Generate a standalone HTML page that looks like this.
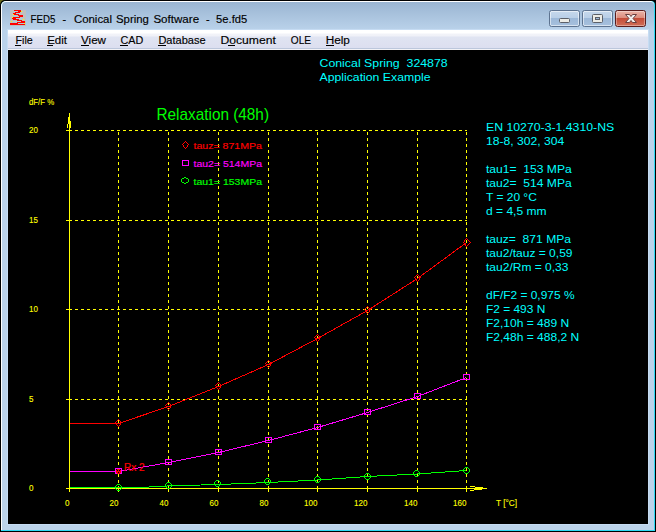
<!DOCTYPE html>
<html><head><meta charset="utf-8"><title>FED5</title>
<style>
html,body{margin:0;padding:0;background:#000;}
body{width:656px;height:532px;position:relative;overflow:hidden;font-family:"Liberation Sans",sans-serif;}
#olive{position:absolute;left:0;top:0;width:5px;height:5px;background:#6a6a1c;}
#frame{position:absolute;left:0;top:0;width:656px;height:532px;background:#000;border-top-left-radius:5px;}
#fr2{position:absolute;left:1px;top:1px;width:654px;height:530px;background:#2fd9f3;border-top-left-radius:5px;border-top-right-radius:4px;}
#fr3{position:absolute;left:1px;top:1px;width:653px;height:529px;background:#fff;border-top-left-radius:5px;border-top-right-radius:4px;}
#fr4{position:absolute;left:2px;top:2px;width:652px;height:528px;background:linear-gradient(to bottom,#9ab5d2 0px,#bad2ea 28px,#bcd3ea 528px);border-top-left-radius:4px;border-top-right-radius:3px;}
#inner{position:absolute;left:7px;top:29px;width:642px;height:496px;background:#c6dcf3;}
#client{position:absolute;left:8px;top:50px;width:640px;height:474px;background:#000;}
#menu{position:absolute;left:8px;top:30px;width:640px;height:20px;background:linear-gradient(to bottom,#fff 0px,#fff 3px,#f2f3f9 4px,#f0f1f8 6px,#e0e4f2 7px,#dcdff0 18px,#bcc7dc 18px,#bcc7dc 19px,#f2f2f6 19px);}
.btn{position:absolute;top:10px;width:29px;height:15px;border:1px solid #5d7390;border-radius:2.5px;background:linear-gradient(to bottom,#c6d8ec 0,#b9cfe7 7px,#9cb8d8 7px,#a6c0dd 15px);box-shadow:inset 0 0 0 1px rgba(255,255,255,.55);}
#bclose{border-color:#5a1c1c;background:linear-gradient(to bottom,#eab4a8 0,#dc8c7c 7px,#c44a36 7px,#d06e58 15px);box-shadow:inset 0 0 0 1px rgba(255,255,255,.35);}
</style></head><body>
<div id="olive"></div><div id="frame"></div><div id="fr2"></div><div id="fr3"></div><div id="fr4"></div><div id="inner"></div>
<div id="menu"></div>
<div id="client"></div>
<div class="btn" style="left:549px"></div>
<div class="btn" style="left:582px"></div>
<div class="btn" id="bclose" style="left:615px"></div>
<svg width="656" height="532" viewBox="0 0 656 532" style="position:absolute;left:0;top:0">
<rect x="559.5" y="18.5" width="10" height="4" rx="1" fill="#ecece6" stroke="#5c6068" stroke-width="1"/>
<rect x="592.5" y="14.5" width="10" height="8" rx="1" fill="#ecece6" stroke="#5c6068" stroke-width="1"/>
<rect x="595.5" y="17.5" width="4" height="2" fill="#9db8d8" stroke="#5c6068" stroke-width="1"/>
<path d="M625.5 14.5 L629.5 14.5 L631 16.5 L632.5 14.5 L636.5 14.5 L633 18.5 L636.5 22.5 L632.5 22.5 L631 20.5 L629.5 22.5 L625.5 22.5 L629 18.5 Z" fill="#f2f0ee" stroke="#6a4040" stroke-width="1"/>
</svg>
<svg width="16" height="16" viewBox="0 0 16 16" style="position:absolute;left:10px;top:10px" shape-rendering="crispEdges"><rect width="16" height="16" fill="#c0c0c0"/><rect x="4" y="1" width="4" height="1" fill="#b2ccd4"/><rect x="6" y="3" width="4" height="1" fill="#b2ccd4"/><rect x="4" y="5" width="4" height="1" fill="#b2ccd4"/><rect x="4" y="6" width="5" height="1" fill="#b2ccd4"/><rect x="6" y="8" width="6" height="1" fill="#b2ccd4"/><rect x="9" y="9" width="3" height="1" fill="#b2ccd4"/><rect x="3" y="11" width="8" height="1" fill="#b2ccd4"/><rect x="5" y="12" width="2" height="1" fill="#b2ccd4"/><rect x="8" y="13" width="6" height="1" fill="#b2ccd4"/><rect x="4" y="0" width="7" height="1" fill="#ff0000"/><rect x="8" y="1" width="3" height="1" fill="#ff0000"/><rect x="5" y="2" width="5" height="1" fill="#ff0000"/><rect x="3" y="3" width="3" height="1" fill="#ff0000"/><rect x="4" y="4" width="5" height="1" fill="#ff0000"/><rect x="8" y="5" width="5" height="1" fill="#ff0000"/><rect x="9" y="6" width="4" height="1" fill="#ff0000"/><rect x="3" y="7" width="7" height="1" fill="#ff0000"/><rect x="2" y="8" width="4" height="1" fill="#ff0000"/><rect x="3" y="9" width="6" height="1" fill="#ff0000"/><rect x="7" y="10" width="5" height="1" fill="#ff0000"/><rect x="11" y="11" width="4" height="1" fill="#ff0000"/><rect x="7" y="12" width="8" height="1" fill="#ff0000"/><rect x="0" y="13" width="8" height="1" fill="#ff0000"/><rect x="0" y="14" width="15" height="1" fill="#ff0000"/><rect x="11" y="1" width="1" height="1" fill="#ffff00"/><rect x="3" y="4" width="1" height="1" fill="#ffff00"/><rect x="2" y="7" width="1" height="1" fill="#ffff00"/><rect x="13" y="9" width="1" height="1" fill="#ffff00"/><rect x="1" y="11" width="1" height="1" fill="#ffff00"/><rect x="14" y="13" width="1" height="1" fill="#ffff00"/></svg>
<svg width="656" height="532" viewBox="0 0 656 532" style="position:absolute;left:0;top:0" font-family="Liberation Sans, sans-serif"><text x="30.6" y="23" font-size="11.6" fill="#000" text-anchor="start" xml:space="preserve" textLength="24.7" lengthAdjust="spacingAndGlyphs" stroke="#000" stroke-width="0.15">FED5</text><text x="62.6" y="23" font-size="11.6" fill="#000" text-anchor="start" xml:space="preserve" textLength="3.6" lengthAdjust="spacingAndGlyphs" stroke="#000" stroke-width="0.15">-</text><text x="73.9" y="23" font-size="11.6" fill="#000" text-anchor="start" xml:space="preserve" textLength="38.1" lengthAdjust="spacingAndGlyphs" stroke="#000" stroke-width="0.15">Conical</text><text x="116" y="23" font-size="11.6" fill="#000" text-anchor="start" xml:space="preserve" textLength="32.8" lengthAdjust="spacingAndGlyphs" stroke="#000" stroke-width="0.15">Spring</text><text x="153.4" y="23" font-size="11.6" fill="#000" text-anchor="start" xml:space="preserve" textLength="45.7" lengthAdjust="spacingAndGlyphs" stroke="#000" stroke-width="0.15">Software</text><text x="205.9" y="23" font-size="11.6" fill="#000" text-anchor="start" xml:space="preserve" textLength="3.6" lengthAdjust="spacingAndGlyphs" stroke="#000" stroke-width="0.15">-</text><text x="216.1" y="23" font-size="11.6" fill="#000" text-anchor="start" xml:space="preserve" textLength="31.1" lengthAdjust="spacingAndGlyphs" stroke="#000" stroke-width="0.15">5e.fd5</text><rect x="15" y="45" width="6" height="1" fill="#000" shape-rendering="crispEdges"/><rect x="47" y="45" width="6" height="1" fill="#000" shape-rendering="crispEdges"/><rect x="81" y="45" width="8" height="1" fill="#000" shape-rendering="crispEdges"/><rect x="120" y="45" width="8" height="1" fill="#000" shape-rendering="crispEdges"/><rect x="158" y="45" width="8" height="1" fill="#000" shape-rendering="crispEdges"/><rect x="228" y="45" width="7" height="1" fill="#000" shape-rendering="crispEdges"/><rect x="326" y="45" width="8" height="1" fill="#000" shape-rendering="crispEdges"/><text x="15.5" y="44" font-size="11.7" fill="#000" text-anchor="start" xml:space="preserve" textLength="17.2" lengthAdjust="spacingAndGlyphs" stroke="#000" stroke-width="0.15">File</text><text x="47.2" y="44" font-size="11.7" fill="#000" text-anchor="start" xml:space="preserve" textLength="19.8" lengthAdjust="spacingAndGlyphs" stroke="#000" stroke-width="0.15">Edit</text><text x="81" y="44" font-size="11.7" fill="#000" text-anchor="start" xml:space="preserve" textLength="25" lengthAdjust="spacingAndGlyphs" stroke="#000" stroke-width="0.15">View</text><text x="120.5" y="44" font-size="11.7" fill="#000" text-anchor="start" xml:space="preserve" textLength="22.8" lengthAdjust="spacingAndGlyphs" stroke="#000" stroke-width="0.15">CAD</text><text x="158.4" y="44" font-size="11.7" fill="#000" text-anchor="start" xml:space="preserve" textLength="47.3" lengthAdjust="spacingAndGlyphs" stroke="#000" stroke-width="0.15">Database</text><text x="220.4" y="44" font-size="11.7" fill="#000" text-anchor="start" xml:space="preserve" textLength="55.4" lengthAdjust="spacingAndGlyphs" stroke="#000" stroke-width="0.15">Document</text><text x="290.8" y="44" font-size="11.7" fill="#000" text-anchor="start" xml:space="preserve" textLength="20.2" lengthAdjust="spacingAndGlyphs" stroke="#000" stroke-width="0.15">OLE</text><text x="325.7" y="44" font-size="11.7" fill="#000" text-anchor="start" xml:space="preserve" textLength="24.2" lengthAdjust="spacingAndGlyphs" stroke="#000" stroke-width="0.15">Help</text></svg>
<svg width="656" height="532" viewBox="0 0 656 532" style="position:absolute;left:0;top:0" shape-rendering="crispEdges"><line x1="118.5" y1="489" x2="118.5" y2="130" stroke="#ffff00" stroke-width="1" stroke-dasharray="3 3"/><rect x="118" y="488" width="1" height="4" fill="#ffff00"/><line x1="168.5" y1="489" x2="168.5" y2="130" stroke="#ffff00" stroke-width="1" stroke-dasharray="3 3"/><rect x="168" y="488" width="1" height="4" fill="#ffff00"/><line x1="218.5" y1="489" x2="218.5" y2="130" stroke="#ffff00" stroke-width="1" stroke-dasharray="3 3"/><rect x="218" y="488" width="1" height="4" fill="#ffff00"/><line x1="268.5" y1="489" x2="268.5" y2="130" stroke="#ffff00" stroke-width="1" stroke-dasharray="3 3"/><rect x="268" y="488" width="1" height="4" fill="#ffff00"/><line x1="317.5" y1="489" x2="317.5" y2="130" stroke="#ffff00" stroke-width="1" stroke-dasharray="3 3"/><rect x="317" y="488" width="1" height="4" fill="#ffff00"/><line x1="367.5" y1="489" x2="367.5" y2="130" stroke="#ffff00" stroke-width="1" stroke-dasharray="3 3"/><rect x="367" y="488" width="1" height="4" fill="#ffff00"/><line x1="417.5" y1="489" x2="417.5" y2="130" stroke="#ffff00" stroke-width="1" stroke-dasharray="3 3"/><rect x="417" y="488" width="1" height="4" fill="#ffff00"/><line x1="466.5" y1="489" x2="466.5" y2="130" stroke="#ffff00" stroke-width="1" stroke-dasharray="3 3"/><rect x="466" y="488" width="1" height="4" fill="#ffff00"/><line x1="69" y1="130.5" x2="467" y2="130.5" stroke="#ffff00" stroke-width="1" stroke-dasharray="3 3"/><rect x="66" y="130" width="4" height="1" fill="#ffff00"/><line x1="69" y1="220.5" x2="467" y2="220.5" stroke="#ffff00" stroke-width="1" stroke-dasharray="3 3"/><rect x="66" y="220" width="4" height="1" fill="#ffff00"/><line x1="69" y1="309.5" x2="467" y2="309.5" stroke="#ffff00" stroke-width="1" stroke-dasharray="3 3"/><rect x="66" y="309" width="4" height="1" fill="#ffff00"/><line x1="69" y1="399.5" x2="467" y2="399.5" stroke="#ffff00" stroke-width="1" stroke-dasharray="3 3"/><rect x="66" y="399" width="4" height="1" fill="#ffff00"/><rect x="69" y="113" width="1" height="379" fill="#ffff00"/><rect x="66" y="488" width="421" height="1" fill="#ffff00"/><rect x="68" y="117" width="1" height="7" fill="#ffff00"/><rect x="70" y="121" width="1" height="7" fill="#ffff00"/><rect x="67" y="124" width="1" height="4" fill="#ffff00"/><rect x="470" y="486" width="5" height="1" fill="#ffff00"/><rect x="475" y="487" width="8" height="1" fill="#ffff00"/><rect x="474" y="489" width="8" height="1" fill="#ffff00"/><rect x="470" y="490" width="4" height="1" fill="#ffff00"/><polyline points="69.5,487.5 118.5,487.5 140.5,487.5 168.5,485.9 218.5,484.5 268.5,482.5 317.5,480.0 367.5,476.5 417.5,474.0 466.5,470.5" fill="none" stroke="#00ff00" stroke-width="1"/><polyline points="69.5,471.5 118.5,471.5 168.5,462.5 218.5,452.5 268.5,440.5 317.5,427.5 367.5,412.5 417.5,396.5 466.5,377.5" fill="none" stroke="#ff00ff" stroke-width="1"/><polyline points="69.5,423.5 118.5,423.5 168.5,406.5 218.5,386.5 268.5,364.5 317.5,338.5 367.5,310.5 417.5,278.5 466.5,242.5" fill="none" stroke="#ff0000" stroke-width="1"/><rect x="118" y="419" width="1" height="1" fill="#ff0000"/><rect x="117" y="420" width="1" height="1" fill="#ff0000"/><rect x="119" y="420" width="1" height="1" fill="#ff0000"/><rect x="116" y="421" width="1" height="1" fill="#ff0000"/><rect x="120" y="421" width="1" height="1" fill="#ff0000"/><rect x="115" y="422" width="1" height="1" fill="#ff0000"/><rect x="121" y="422" width="1" height="1" fill="#ff0000"/><rect x="116" y="423" width="1" height="1" fill="#ff0000"/><rect x="120" y="423" width="1" height="1" fill="#ff0000"/><rect x="116" y="424" width="1" height="1" fill="#ff0000"/><rect x="120" y="424" width="1" height="1" fill="#ff0000"/><rect x="117" y="425" width="1" height="1" fill="#ff0000"/><rect x="119" y="425" width="1" height="1" fill="#ff0000"/><rect x="118" y="426" width="1" height="1" fill="#ff0000"/><rect x="168" y="402" width="1" height="1" fill="#ff0000"/><rect x="167" y="403" width="1" height="1" fill="#ff0000"/><rect x="169" y="403" width="1" height="1" fill="#ff0000"/><rect x="166" y="404" width="1" height="1" fill="#ff0000"/><rect x="170" y="404" width="1" height="1" fill="#ff0000"/><rect x="165" y="405" width="1" height="1" fill="#ff0000"/><rect x="171" y="405" width="1" height="1" fill="#ff0000"/><rect x="166" y="406" width="1" height="1" fill="#ff0000"/><rect x="170" y="406" width="1" height="1" fill="#ff0000"/><rect x="166" y="407" width="1" height="1" fill="#ff0000"/><rect x="170" y="407" width="1" height="1" fill="#ff0000"/><rect x="167" y="408" width="1" height="1" fill="#ff0000"/><rect x="169" y="408" width="1" height="1" fill="#ff0000"/><rect x="168" y="409" width="1" height="1" fill="#ff0000"/><rect x="218" y="382" width="1" height="1" fill="#ff0000"/><rect x="217" y="383" width="1" height="1" fill="#ff0000"/><rect x="219" y="383" width="1" height="1" fill="#ff0000"/><rect x="216" y="384" width="1" height="1" fill="#ff0000"/><rect x="220" y="384" width="1" height="1" fill="#ff0000"/><rect x="215" y="385" width="1" height="1" fill="#ff0000"/><rect x="221" y="385" width="1" height="1" fill="#ff0000"/><rect x="216" y="386" width="1" height="1" fill="#ff0000"/><rect x="220" y="386" width="1" height="1" fill="#ff0000"/><rect x="216" y="387" width="1" height="1" fill="#ff0000"/><rect x="220" y="387" width="1" height="1" fill="#ff0000"/><rect x="217" y="388" width="1" height="1" fill="#ff0000"/><rect x="219" y="388" width="1" height="1" fill="#ff0000"/><rect x="218" y="389" width="1" height="1" fill="#ff0000"/><rect x="268" y="360" width="1" height="1" fill="#ff0000"/><rect x="267" y="361" width="1" height="1" fill="#ff0000"/><rect x="269" y="361" width="1" height="1" fill="#ff0000"/><rect x="266" y="362" width="1" height="1" fill="#ff0000"/><rect x="270" y="362" width="1" height="1" fill="#ff0000"/><rect x="265" y="363" width="1" height="1" fill="#ff0000"/><rect x="271" y="363" width="1" height="1" fill="#ff0000"/><rect x="266" y="364" width="1" height="1" fill="#ff0000"/><rect x="270" y="364" width="1" height="1" fill="#ff0000"/><rect x="266" y="365" width="1" height="1" fill="#ff0000"/><rect x="270" y="365" width="1" height="1" fill="#ff0000"/><rect x="267" y="366" width="1" height="1" fill="#ff0000"/><rect x="269" y="366" width="1" height="1" fill="#ff0000"/><rect x="268" y="367" width="1" height="1" fill="#ff0000"/><rect x="317" y="334" width="1" height="1" fill="#ff0000"/><rect x="316" y="335" width="1" height="1" fill="#ff0000"/><rect x="318" y="335" width="1" height="1" fill="#ff0000"/><rect x="315" y="336" width="1" height="1" fill="#ff0000"/><rect x="319" y="336" width="1" height="1" fill="#ff0000"/><rect x="314" y="337" width="1" height="1" fill="#ff0000"/><rect x="320" y="337" width="1" height="1" fill="#ff0000"/><rect x="315" y="338" width="1" height="1" fill="#ff0000"/><rect x="319" y="338" width="1" height="1" fill="#ff0000"/><rect x="315" y="339" width="1" height="1" fill="#ff0000"/><rect x="319" y="339" width="1" height="1" fill="#ff0000"/><rect x="316" y="340" width="1" height="1" fill="#ff0000"/><rect x="318" y="340" width="1" height="1" fill="#ff0000"/><rect x="317" y="341" width="1" height="1" fill="#ff0000"/><rect x="367" y="306" width="1" height="1" fill="#ff0000"/><rect x="366" y="307" width="1" height="1" fill="#ff0000"/><rect x="368" y="307" width="1" height="1" fill="#ff0000"/><rect x="365" y="308" width="1" height="1" fill="#ff0000"/><rect x="369" y="308" width="1" height="1" fill="#ff0000"/><rect x="364" y="309" width="1" height="1" fill="#ff0000"/><rect x="370" y="309" width="1" height="1" fill="#ff0000"/><rect x="365" y="310" width="1" height="1" fill="#ff0000"/><rect x="369" y="310" width="1" height="1" fill="#ff0000"/><rect x="365" y="311" width="1" height="1" fill="#ff0000"/><rect x="369" y="311" width="1" height="1" fill="#ff0000"/><rect x="366" y="312" width="1" height="1" fill="#ff0000"/><rect x="368" y="312" width="1" height="1" fill="#ff0000"/><rect x="367" y="313" width="1" height="1" fill="#ff0000"/><rect x="417" y="274" width="1" height="1" fill="#ff0000"/><rect x="416" y="275" width="1" height="1" fill="#ff0000"/><rect x="418" y="275" width="1" height="1" fill="#ff0000"/><rect x="415" y="276" width="1" height="1" fill="#ff0000"/><rect x="419" y="276" width="1" height="1" fill="#ff0000"/><rect x="414" y="277" width="1" height="1" fill="#ff0000"/><rect x="420" y="277" width="1" height="1" fill="#ff0000"/><rect x="415" y="278" width="1" height="1" fill="#ff0000"/><rect x="419" y="278" width="1" height="1" fill="#ff0000"/><rect x="415" y="279" width="1" height="1" fill="#ff0000"/><rect x="419" y="279" width="1" height="1" fill="#ff0000"/><rect x="416" y="280" width="1" height="1" fill="#ff0000"/><rect x="418" y="280" width="1" height="1" fill="#ff0000"/><rect x="417" y="281" width="1" height="1" fill="#ff0000"/><rect x="466" y="238" width="1" height="1" fill="#ff0000"/><rect x="465" y="239" width="1" height="1" fill="#ff0000"/><rect x="467" y="239" width="1" height="1" fill="#ff0000"/><rect x="464" y="240" width="1" height="2" fill="#ff0000"/><rect x="468" y="240" width="1" height="1" fill="#ff0000"/><rect x="469" y="241" width="1" height="1" fill="#ff0000"/><rect x="463" y="242" width="1" height="1" fill="#ff0000"/><rect x="470" y="242" width="1" height="1" fill="#ff0000"/><rect x="464" y="243" width="1" height="1" fill="#ff0000"/><rect x="469" y="243" width="1" height="1" fill="#ff0000"/><rect x="465" y="244" width="1" height="2" fill="#ff0000"/><rect x="468" y="244" width="1" height="1" fill="#ff0000"/><rect x="467" y="245" width="1" height="1" fill="#ff0000"/><rect x="466" y="246" width="1" height="1" fill="#ff0000"/><rect x="115.5" y="468.5" width="6" height="5" fill="none" stroke="#ff00ff" stroke-width="1"/><rect x="165.5" y="459.5" width="6" height="5" fill="none" stroke="#ff00ff" stroke-width="1"/><rect x="215.5" y="449.5" width="6" height="5" fill="none" stroke="#ff00ff" stroke-width="1"/><rect x="265.5" y="437.5" width="6" height="5" fill="none" stroke="#ff00ff" stroke-width="1"/><rect x="314.5" y="424.5" width="6" height="5" fill="none" stroke="#ff00ff" stroke-width="1"/><rect x="364.5" y="409.5" width="6" height="5" fill="none" stroke="#ff00ff" stroke-width="1"/><rect x="414.5" y="393.5" width="6" height="5" fill="none" stroke="#ff00ff" stroke-width="1"/><rect x="463.5" y="374.5" width="6" height="5" fill="none" stroke="#ff00ff" stroke-width="1"/><rect x="117" y="484" width="3" height="1" fill="#00ff00"/><rect x="116" y="485" width="1" height="1" fill="#00ff00"/><rect x="120" y="485" width="1" height="1" fill="#00ff00"/><rect x="115" y="486" width="1" height="3" fill="#00ff00"/><rect x="121" y="486" width="1" height="3" fill="#00ff00"/><rect x="116" y="489" width="1" height="1" fill="#00ff00"/><rect x="120" y="489" width="1" height="1" fill="#00ff00"/><rect x="117" y="490" width="3" height="1" fill="#00ff00"/><rect x="167" y="482" width="3" height="1" fill="#00ff00"/><rect x="166" y="483" width="1" height="1" fill="#00ff00"/><rect x="170" y="483" width="1" height="1" fill="#00ff00"/><rect x="165" y="484" width="1" height="3" fill="#00ff00"/><rect x="171" y="484" width="1" height="3" fill="#00ff00"/><rect x="166" y="487" width="1" height="1" fill="#00ff00"/><rect x="170" y="487" width="1" height="1" fill="#00ff00"/><rect x="167" y="488" width="3" height="1" fill="#00ff00"/><rect x="216" y="480" width="3" height="1" fill="#00ff00"/><rect x="215" y="481" width="1" height="1" fill="#00ff00"/><rect x="219" y="481" width="1" height="1" fill="#00ff00"/><rect x="214" y="482" width="1" height="3" fill="#00ff00"/><rect x="220" y="482" width="1" height="3" fill="#00ff00"/><rect x="215" y="485" width="1" height="1" fill="#00ff00"/><rect x="219" y="485" width="1" height="1" fill="#00ff00"/><rect x="216" y="486" width="3" height="1" fill="#00ff00"/><rect x="266" y="478" width="3" height="1" fill="#00ff00"/><rect x="265" y="479" width="1" height="1" fill="#00ff00"/><rect x="269" y="479" width="1" height="1" fill="#00ff00"/><rect x="264" y="480" width="1" height="3" fill="#00ff00"/><rect x="270" y="480" width="1" height="3" fill="#00ff00"/><rect x="265" y="483" width="1" height="1" fill="#00ff00"/><rect x="269" y="483" width="1" height="1" fill="#00ff00"/><rect x="266" y="484" width="3" height="1" fill="#00ff00"/><rect x="316" y="476" width="3" height="1" fill="#00ff00"/><rect x="315" y="477" width="1" height="1" fill="#00ff00"/><rect x="319" y="477" width="1" height="1" fill="#00ff00"/><rect x="314" y="478" width="1" height="3" fill="#00ff00"/><rect x="320" y="478" width="1" height="3" fill="#00ff00"/><rect x="315" y="481" width="1" height="1" fill="#00ff00"/><rect x="319" y="481" width="1" height="1" fill="#00ff00"/><rect x="316" y="482" width="3" height="1" fill="#00ff00"/><rect x="366" y="473" width="3" height="1" fill="#00ff00"/><rect x="365" y="474" width="1" height="1" fill="#00ff00"/><rect x="369" y="474" width="1" height="1" fill="#00ff00"/><rect x="364" y="475" width="1" height="3" fill="#00ff00"/><rect x="370" y="475" width="1" height="3" fill="#00ff00"/><rect x="365" y="478" width="1" height="1" fill="#00ff00"/><rect x="369" y="478" width="1" height="1" fill="#00ff00"/><rect x="366" y="479" width="3" height="1" fill="#00ff00"/><rect x="415" y="470" width="3" height="1" fill="#00ff00"/><rect x="414" y="471" width="1" height="1" fill="#00ff00"/><rect x="418" y="471" width="1" height="1" fill="#00ff00"/><rect x="413" y="472" width="1" height="3" fill="#00ff00"/><rect x="419" y="472" width="1" height="3" fill="#00ff00"/><rect x="414" y="475" width="1" height="1" fill="#00ff00"/><rect x="418" y="475" width="1" height="1" fill="#00ff00"/><rect x="415" y="476" width="3" height="1" fill="#00ff00"/><rect x="465" y="467" width="3" height="1" fill="#00ff00"/><rect x="464" y="468" width="1" height="1" fill="#00ff00"/><rect x="468" y="468" width="1" height="1" fill="#00ff00"/><rect x="463" y="469" width="1" height="3" fill="#00ff00"/><rect x="469" y="469" width="1" height="3" fill="#00ff00"/><rect x="464" y="472" width="1" height="1" fill="#00ff00"/><rect x="468" y="472" width="1" height="1" fill="#00ff00"/><rect x="465" y="473" width="3" height="1" fill="#00ff00"/><rect x="117" y="469" width="3" height="1" fill="#ff0000"/><rect x="116" y="470" width="5" height="3" fill="#ff0000"/><rect x="117" y="473" width="3" height="1" fill="#ff0000"/><rect x="117" y="470" width="1" height="1" fill="#000"/><rect x="119" y="470" width="1" height="1" fill="#000"/><rect x="118" y="472" width="1" height="1" fill="#000"/><rect x="185" y="141" width="1" height="1" fill="#ff0000"/><rect x="184" y="142" width="1" height="1" fill="#ff0000"/><rect x="186" y="142" width="1" height="1" fill="#ff0000"/><rect x="183" y="143" width="1" height="1" fill="#ff0000"/><rect x="187" y="143" width="1" height="1" fill="#ff0000"/><rect x="182" y="144" width="1" height="1" fill="#ff0000"/><rect x="188" y="144" width="1" height="1" fill="#ff0000"/><rect x="183" y="145" width="1" height="1" fill="#ff0000"/><rect x="187" y="145" width="1" height="1" fill="#ff0000"/><rect x="183" y="146" width="1" height="1" fill="#ff0000"/><rect x="187" y="146" width="1" height="1" fill="#ff0000"/><rect x="184" y="147" width="1" height="1" fill="#ff0000"/><rect x="186" y="147" width="1" height="1" fill="#ff0000"/><rect x="185" y="148" width="1" height="1" fill="#ff0000"/><rect x="182.5" y="160.5" width="6" height="5" fill="none" stroke="#ff00ff" stroke-width="1"/><rect x="184" y="177" width="2" height="1" fill="#00ff00"/><rect x="182" y="178" width="2" height="1" fill="#00ff00"/><rect x="186" y="178" width="2" height="1" fill="#00ff00"/><rect x="181" y="179" width="1" height="3" fill="#00ff00"/><rect x="188" y="179" width="1" height="3" fill="#00ff00"/><rect x="182" y="182" width="2" height="1" fill="#00ff00"/><rect x="186" y="182" width="2" height="1" fill="#00ff00"/><rect x="184" y="183" width="2" height="1" fill="#00ff00"/></svg>
<svg width="656" height="532" viewBox="0 0 656 532" style="position:absolute;left:0;top:0" font-family="Liberation Sans, sans-serif"><text x="319.5" y="67" font-size="11" fill="#00ffff" text-anchor="start" xml:space="preserve" textLength="128.2" lengthAdjust="spacingAndGlyphs">Conical Spring  324878</text><text x="319.5" y="81" font-size="11" fill="#00ffff" text-anchor="start" xml:space="preserve" textLength="111" lengthAdjust="spacingAndGlyphs">Application Example</text><text x="486" y="131" font-size="11" fill="#00ffff" text-anchor="start" xml:space="preserve" textLength="128.2" lengthAdjust="spacingAndGlyphs">EN 10270-3-1.4310-NS</text><text x="486" y="145" font-size="11" fill="#00ffff" text-anchor="start" xml:space="preserve" textLength="78.2" lengthAdjust="spacingAndGlyphs">18-8, 302, 304</text><text x="486" y="173" font-size="11" fill="#00ffff" text-anchor="start" xml:space="preserve" textLength="85.7" lengthAdjust="spacingAndGlyphs">tau1=  153 MPa</text><text x="486" y="187" font-size="11" fill="#00ffff" text-anchor="start" xml:space="preserve" textLength="85.7" lengthAdjust="spacingAndGlyphs">tau2=  514 MPa</text><text x="486" y="201" font-size="11" fill="#00ffff" text-anchor="start" xml:space="preserve" textLength="50.8" lengthAdjust="spacingAndGlyphs">T = 20 °C</text><text x="486" y="215" font-size="11" fill="#00ffff" text-anchor="start" xml:space="preserve" textLength="60.5" lengthAdjust="spacingAndGlyphs">d = 4,5 mm</text><text x="486" y="243" font-size="11" fill="#00ffff" text-anchor="start" xml:space="preserve" textLength="85" lengthAdjust="spacingAndGlyphs">tauz=  871 MPa</text><text x="486" y="257" font-size="11" fill="#00ffff" text-anchor="start" xml:space="preserve" textLength="86.5" lengthAdjust="spacingAndGlyphs">tau2/tauz = 0,59</text><text x="486" y="271" font-size="11" fill="#00ffff" text-anchor="start" xml:space="preserve" textLength="82.5" lengthAdjust="spacingAndGlyphs">tau2/Rm = 0,33</text><text x="486" y="299" font-size="11" fill="#00ffff" text-anchor="start" xml:space="preserve" textLength="88.5" lengthAdjust="spacingAndGlyphs">dF/F2 = 0,975 %</text><text x="486" y="313" font-size="11" fill="#00ffff" text-anchor="start" xml:space="preserve" textLength="59.3" lengthAdjust="spacingAndGlyphs">F2 = 493 N</text><text x="486" y="327" font-size="11" fill="#00ffff" text-anchor="start" xml:space="preserve" textLength="83.2" lengthAdjust="spacingAndGlyphs">F2,10h = 489 N</text><text x="486" y="341" font-size="11" fill="#00ffff" text-anchor="start" xml:space="preserve" textLength="93.2" lengthAdjust="spacingAndGlyphs">F2,48h = 488,2 N</text><text x="156.5" y="120" font-size="16.4" fill="#00ff00" text-anchor="start" xml:space="preserve" textLength="112.5" lengthAdjust="spacingAndGlyphs">Relaxation (48h)</text><text x="193.5" y="149" font-size="9.5" fill="#ff0000" text-anchor="start" xml:space="preserve" textLength="68.5" lengthAdjust="spacingAndGlyphs" stroke="#ff0000" stroke-width="0.15">tauz= 871MPa</text><text x="193.5" y="167" font-size="9.5" fill="#ff00ff" text-anchor="start" xml:space="preserve" textLength="68.5" lengthAdjust="spacingAndGlyphs" stroke="#ff00ff" stroke-width="0.15">tau2= 514MPa</text><text x="193.5" y="185" font-size="9.5" fill="#00ff00" text-anchor="start" xml:space="preserve" textLength="68.5" lengthAdjust="spacingAndGlyphs" stroke="#00ff00" stroke-width="0.15">tau1= 153MPa</text><text x="29" y="105" font-size="9.4" fill="#ffff00" text-anchor="start" xml:space="preserve" textLength="25.2" lengthAdjust="spacingAndGlyphs" stroke="#ffff00" stroke-width="0.12">dF/F %</text><text x="29" y="133" font-size="9.4" fill="#ffff00" text-anchor="start" xml:space="preserve" textLength="8.9" lengthAdjust="spacingAndGlyphs" stroke="#ffff00" stroke-width="0.12">20</text><text x="29" y="223" font-size="9.4" fill="#ffff00" text-anchor="start" xml:space="preserve" textLength="8.9" lengthAdjust="spacingAndGlyphs" stroke="#ffff00" stroke-width="0.12">15</text><text x="29" y="312" font-size="9.4" fill="#ffff00" text-anchor="start" xml:space="preserve" textLength="8.9" lengthAdjust="spacingAndGlyphs" stroke="#ffff00" stroke-width="0.12">10</text><text x="29" y="402" font-size="9.4" fill="#ffff00" text-anchor="start" xml:space="preserve" textLength="4.5" lengthAdjust="spacingAndGlyphs" stroke="#ffff00" stroke-width="0.12">5</text><text x="29" y="491" font-size="9.4" fill="#ffff00" text-anchor="start" xml:space="preserve" textLength="4.5" lengthAdjust="spacingAndGlyphs" stroke="#ffff00" stroke-width="0.12">0</text><text x="65.0" y="505.5" font-size="9.4" fill="#ffff00" text-anchor="start" xml:space="preserve" textLength="4.5" lengthAdjust="spacingAndGlyphs" stroke="#ffff00" stroke-width="0.12">0</text><text x="109.6" y="505.5" font-size="9.4" fill="#ffff00" text-anchor="start" xml:space="preserve" textLength="8.9" lengthAdjust="spacingAndGlyphs" stroke="#ffff00" stroke-width="0.12">20</text><text x="159.6" y="505.5" font-size="9.4" fill="#ffff00" text-anchor="start" xml:space="preserve" textLength="8.9" lengthAdjust="spacingAndGlyphs" stroke="#ffff00" stroke-width="0.12">40</text><text x="209.6" y="505.5" font-size="9.4" fill="#ffff00" text-anchor="start" xml:space="preserve" textLength="8.9" lengthAdjust="spacingAndGlyphs" stroke="#ffff00" stroke-width="0.12">60</text><text x="259.6" y="505.5" font-size="9.4" fill="#ffff00" text-anchor="start" xml:space="preserve" textLength="8.9" lengthAdjust="spacingAndGlyphs" stroke="#ffff00" stroke-width="0.12">80</text><text x="304.1" y="505.5" font-size="9.4" fill="#ffff00" text-anchor="start" xml:space="preserve" textLength="13.4" lengthAdjust="spacingAndGlyphs" stroke="#ffff00" stroke-width="0.12">100</text><text x="354.1" y="505.5" font-size="9.4" fill="#ffff00" text-anchor="start" xml:space="preserve" textLength="13.4" lengthAdjust="spacingAndGlyphs" stroke="#ffff00" stroke-width="0.12">120</text><text x="404.1" y="505.5" font-size="9.4" fill="#ffff00" text-anchor="start" xml:space="preserve" textLength="13.4" lengthAdjust="spacingAndGlyphs" stroke="#ffff00" stroke-width="0.12">140</text><text x="453.1" y="505.5" font-size="9.4" fill="#ffff00" text-anchor="start" xml:space="preserve" textLength="13.4" lengthAdjust="spacingAndGlyphs" stroke="#ffff00" stroke-width="0.12">160</text><text x="496" y="505.5" font-size="9.4" fill="#ffff00" text-anchor="start" xml:space="preserve" textLength="21" lengthAdjust="spacingAndGlyphs" stroke="#ffff00" stroke-width="0.12">T [°C]</text><text x="124" y="471" font-size="10" fill="#ff0000" text-anchor="start" xml:space="preserve" stroke="#ff0000" stroke-width="0.2">Rx 2</text></svg>
</body></html>
